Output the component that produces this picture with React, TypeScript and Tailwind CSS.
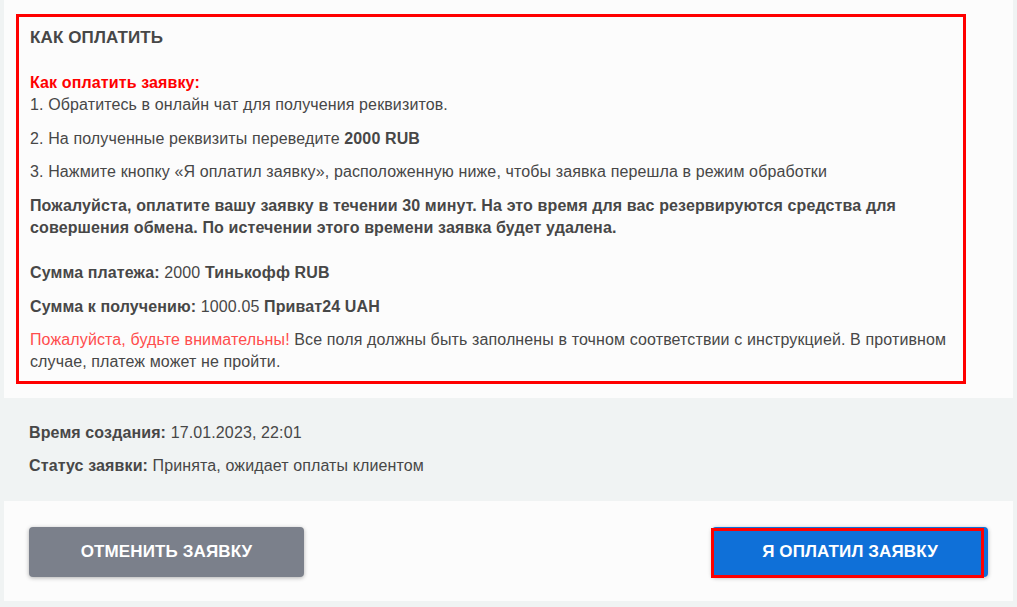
export default function App() {
  return (
    <div className="min-h-screen bg-[#f0f3f3] pl-1 pr-[4px] font-['Liberation_Sans',Arial,sans-serif] text-[16px] leading-[22px] tracking-[0.12px] text-[#474747]">
      <div className="bg-[#fcfcfc] pl-3 pr-[47px] pt-[14px] pb-[14px]">
        <div className="border-[3px] border-[#ff0000] pl-[11px] pr-[10px] pt-[10px] pb-[8px]">
          <h2 className="text-[17px] font-bold uppercase">Как оплатить</h2>
          <p className="mt-[23px]">
            <span className="font-bold text-[#ff0000]">Как оплатить заявку:</span>
            <br />
            1. Обратитесь в онлайн чат для получения реквизитов.
          </p>
          <p className="mt-[12px]">
            2. На полученные реквизиты переведите <b>2000 RUB</b>
          </p>
          <p className="mt-[11px]">
            3. Нажмите кнопку «Я оплатил заявку», расположенную ниже, чтобы заявка перешла в режим обработки
          </p>
          <p className="mt-[12px] font-bold">
            Пожалуйста, оплатите вашу заявку в течении 30 минут. На это время для вас резервируются средства для
            совершения обмена. По истечении этого времени заявка будет удалена.
          </p>
          <p className="mt-[23px]">
            <b>Сумма платежа:</b> 2000 <b>Тинькофф RUB</b>
          </p>
          <p className="mt-[12px]">
            <b>Сумма к получению:</b> 1000.05 <b>Приват24 UAH</b>
          </p>
          <p className="mt-[11px]">
            <span className="text-[#ff4d4d]">Пожалуйста, будьте внимательны!</span> Все поля должны быть заполнены в
            точном соответствии с инструкцией. В противном случае, платеж может не пройти.
          </p>
        </div>
      </div>

      <div className="bg-[#f0f3f3] pl-[25px] pt-[24px] pb-[24px]">
        <p>
          <b>Время создания:</b> 17.01.2023, 22:01
        </p>
        <p className="mt-[11px]">
          <b>Статус заявки:</b> Принята, ожидает оплаты клиентом
        </p>
      </div>

      <div className="flex items-center justify-between bg-[#fcfcfc] px-[25px] pt-[26px] pb-[24px]">
        <button
          type="button"
          className="h-[50px] w-[275px] rounded-[4px] bg-[#7b808b] text-[17px] font-bold uppercase text-white shadow-[0_1px_4px_rgba(0,0,0,0.3)]"
        >
          Отменить заявку
        </button>
        <button
          type="button"
          className="relative h-[50px] w-[276px] rounded-[4px] bg-[#0f70d8] text-[17px] font-bold uppercase text-white shadow-[0_1px_4px_rgba(0,0,0,0.3)]"
        >
          <span className="pointer-events-none absolute top-[1px] bottom-[-1px] left-[-1px] right-[4px] border-[3px] border-[#ff0000]" />
          <span className="relative">Я оплатил заявку</span>
        </button>
      </div>
      <div className="h-[7px]" />
    </div>
  );
}
